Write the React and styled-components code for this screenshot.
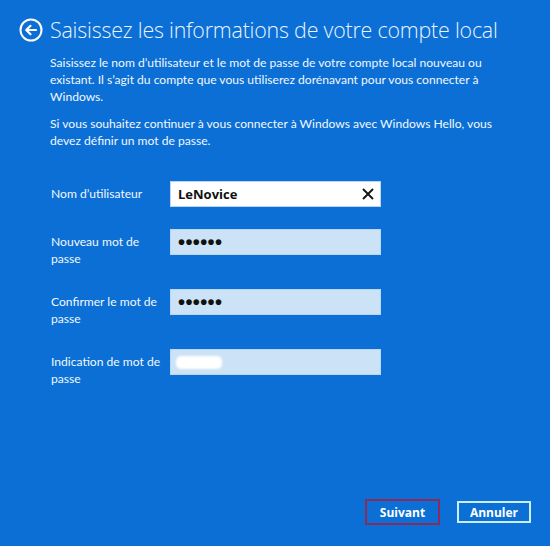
import React from "react";
import styled, { createGlobalStyle } from "styled-components";

const Global = createGlobalStyle`
  html, body { margin: 0; padding: 0; }
  body {
    background: #0b6fd5;
    font-family: "Segoe UI", Lato, "Noto Sans", sans-serif;
    color: #fff;
  }
`;

const Page = styled.div`
  min-height: 546px;
  box-sizing: border-box;
  display: flex;
  flex-direction: column;
  padding: 17px 19px 21px 19px;
`;

const Header = styled.div`
  display: flex;
  align-items: center;
  gap: 7px;
`;

const BackButton = styled.div`
  width: 24px;
  height: 24px;
  display: flex;
  align-items: center;
  justify-content: center;
`;

const Title = styled.h1`
  margin: 0;
  font-family: "Open Sans", sans-serif;
  font-weight: 300;
  font-size: 21.4px;
  line-height: 26px;
  color: #eaf4ff;
  letter-spacing: -0.2px;
  white-space: nowrap;
`;

const Body = styled.div`
  padding-left: 31px;
  padding-top: 11px;
  display: flex;
  flex-direction: column;
`;

const Para = styled.p`
  margin: 0 0 10px 0;
  font-size: 12.1px;
  line-height: 17px;
  color: #f2f8ff;
  white-space: nowrap;
`;

const Form = styled.div`
  margin-top: 22px;
  display: flex;
  flex-direction: column;
  gap: 22px;
  padding-left: 1px;
`;

const Row = styled.div`
  display: flex;
  align-items: flex-start;
`;

const Label = styled.div`
  width: 115px;
  margin-right: 4px;
  font-size: 12.1px;
  line-height: 17px;
  padding-top: 4px;
  color: #f2f8ff;
`;

const Field = styled.div`
  width: 211px;
  height: 26px;
  box-sizing: border-box;
  border: 1px solid #b9d7f3;
  background: ${(p) => (p.$white ? "#ffffff" : "#cce2f6")};
  display: flex;
  align-items: center;
  padding: 0 6px 0 7px;
  color: #111;
`;

const Value = styled.span`
  flex: 1;
  font-family: "Open Sans", sans-serif;
  font-weight: 700;
  font-size: 13px;
`;

const Dots = styled.span`
  flex: 1;
  font-family: "Liberation Sans", sans-serif;
  font-weight: 700;
  font-size: 20px;
  line-height: 20px;
  letter-spacing: 0.4px;
  color: #111;
`;

const Redacted = styled.span`
  display: inline-block;
  width: 46px;
  height: 13px;
  border-radius: 5px;
  background: #ffffff;
  filter: blur(1px);
  margin-left: -2px;
`;

const Clear = styled.div`
  width: 12px;
  height: 12px;
  display: flex;
`;

const Footer = styled.div`
  margin-top: auto;
  display: flex;
  justify-content: flex-end;
  align-items: center;
  gap: 17px;
`;

const Button = styled.button`
  box-sizing: border-box;
  width: ${(p) => (p.$primary ? "75px" : "74px")};
  height: ${(p) => (p.$primary ? "26px" : "22px")};
  background: #0b6fd5;
  border: 2px solid ${(p) => (p.$primary ? "#8a2b5c" : "#c9eefc")};
  color: #fff;
  font-family: "Open Sans", sans-serif;
  font-weight: 700;
  font-size: 12px;
  padding: 0;
  cursor: pointer;
`;

function BackIcon() {
  return (
    <svg width="24" height="24" viewBox="0 0 24 24" fill="none">
      <circle cx="12" cy="12" r="10.5" stroke="#fff" strokeWidth="2" />
      <path d="M17 12H7.5M11.5 7.8L7.2 12l4.3 4.2" stroke="#fff" strokeWidth="2.2" strokeLinecap="round" strokeLinejoin="round" />
    </svg>
  );
}

function XIcon() {
  return (
    <svg width="12" height="12" viewBox="0 0 12 12">
      <path d="M1 1L11 11M11 1L1 11" stroke="#111" strokeWidth="1.8" />
    </svg>
  );
}

export default function App() {
  return (
    <>
      <Global />
      <Page>
        <Header>
          <BackButton>
            <BackIcon />
          </BackButton>
          <Title>Saisissez les informations de votre compte local</Title>
        </Header>
        <Body>
          <Para>
            Saisissez le nom d’utilisateur et le mot de passe de votre compte local nouveau ou
            <br />
            existant. Il s’agit du compte que vous utiliserez dorénavant pour vous connecter à
            <br />
            Windows.
          </Para>
          <Para>
            Si vous souhaitez continuer à vous connecter à Windows avec Windows Hello, vous
            <br />
            devez définir un mot de passe.
          </Para>
          <Form>
            <Row>
              <Label>Nom d’utilisateur</Label>
              <Field $white>
                <Value>LeNovice</Value>
                <Clear>
                  <XIcon />
                </Clear>
              </Field>
            </Row>
            <Row>
              <Label>Nouveau mot de passe</Label>
              <Field>
                <Dots>••••••</Dots>
              </Field>
            </Row>
            <Row>
              <Label>Confirmer le mot de passe</Label>
              <Field>
                <Dots>••••••</Dots>
              </Field>
            </Row>
            <Row>
              <Label>Indication de mot de passe</Label>
              <Field>
                <Redacted />
              </Field>
            </Row>
          </Form>
        </Body>
        <Footer>
          <Button $primary>Suivant</Button>
          <Button>Annuler</Button>
        </Footer>
      </Page>
    </>
  );
}
